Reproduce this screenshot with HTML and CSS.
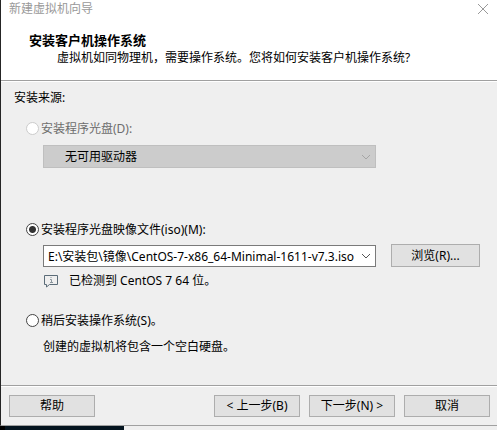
FILE: index.html
```html
<!DOCTYPE html>
<html lang="zh-CN">
<head>
    <meta charset="UTF-8">
    <meta name="viewport" content="width=device-width, initial-scale=1.0">
    <title>新建虚拟机向导</title>
    <link rel="stylesheet" href="styles.css">
</head>
<body>
    <form class="wizard">
        <header class="wizard-header">
            <div class="title-bar">
                <span>新建虚拟机向导</span>
                <button type="button" class="close" aria-label="关闭">
                    <svg width="10" height="10" viewBox="0 0 10 10"><path d="M0 0L10 10M10 0L0 10"/></svg>
                </button>
            </div>
            <h1>安装客户机操作系统</h1>
            <p>虚拟机如同物理机，需要操作系统。您将如何安装客户机操作系统?</p>
        </header>

        <main class="wizard-body">
            <h2>安装来源:</h2>

            <section class="option option-disc">
                <label class="radio disabled">
                    <input type="radio" name="source" value="disc" disabled>
                    <span>安装程序光盘(D):</span>
                </label>
                <div class="row">
                    <div class="combo combo-disabled">
                        <select aria-label="安装程序光盘" disabled>
                            <option>无可用驱动器</option>
                        </select>
                        <svg class="chevron" width="10" height="6" viewBox="0 0 10 6"><path d="M1 1L5 5L9 1"/></svg>
                    </div>
                </div>
            </section>

            <section class="option option-iso">
                <label class="radio">
                    <input type="radio" name="source" value="iso" checked>
                    <span>安装程序光盘映像文件(iso)(M):</span>
                </label>
                <div class="row">
                    <div class="combo combo-edit">
                        <input type="text" aria-label="映像文件路径" value="E:\安装包\镜像\CentOS-7-x86_64-Minimal-1611-v7.3.iso">
                        <button type="button" class="drop" aria-label="展开">
                            <svg class="chevron" width="10" height="6" viewBox="0 0 10 6"><path d="M1 1L5 5L9 1"/></svg>
                        </button>
                    </div>
                    <button type="button" class="btn browse">浏览(R)...</button>
                </div>
                <div class="info">
                    <svg width="14" height="13" viewBox="0 0 14 13">
                        <path class="bubble" d="M.5 .5H13.5V9.5H5.5L2.5 12V9.5H.5Z"/>
                        <path class="mark" d="M7 2V3M6 4.500H7.500V7.500M6 7.500H9"/>
                    </svg>
                    <span>已检测到 CentOS 7 64 位。</span>
                </div>
            </section>

            <section class="option">
                <label class="radio">
                    <input type="radio" name="source" value="later">
                    <span>稍后安装操作系统(S)。</span>
                </label>
                <p class="hint">创建的虚拟机将包含一个空白硬盘。</p>
            </section>
        </main>

        <footer class="wizard-footer">
            <button type="button" class="btn help">帮助</button>
            <button type="button" class="btn">&lt; 上一步(B)</button>
            <button type="submit" class="btn">下一步(N) &gt;</button>
            <button type="button" class="btn">取消</button>
        </footer>
    </form>
    <div class="backdrop"><div class="backdrop-dark"></div></div>
</body>
</html>
```
FILE: styles.css
```css
* { box-sizing: border-box; }
body { margin: 0; min-height: 100vh; display: flex; flex-direction: column; background-color: #efefef; color: #000; font-family: "Noto Sans", "Noto Sans CJK SC", sans-serif; font-size: 12px; line-height: 16px; }
h1, h2, p { margin: 0; font-size: 12px; font-weight: normal; }
button, input, select { font: inherit; color: inherit; margin: 0; }
svg { display: block; fill: none; }

.wizard { flex: 1; display: flex; flex-direction: column; border-left: 1px solid #252525; border-bottom: 1px solid #a0a0a0; }

.wizard-header { background-color: #fff; border-bottom: 1px solid #a0a0a0; padding-bottom: 14px; }
.title-bar { display: flex; justify-content: space-between; align-items: center; height: 17px; padding: 0 9px 0 8px; color: #999; }
.close { border: none; background: none; padding: 0; }
.close svg { stroke: #999; overflow: visible; }
.wizard-header h1 { padding-left: 28px; margin-top: 13px; font-size: 13px; font-weight: bold; line-height: 20px; }
.wizard-header p { padding-left: 56px; }

.wizard-body { flex: 1; border-top: 1px solid #fff; padding: 8px 17px 0 13px; }
.option { padding-left: 12px; }
.option-disc { margin-top: 14px; }
.option-iso { margin-top: 53px; margin-bottom: 24px; }
.radio { display: flex; align-items: center; gap: 2px; height: 16px; }
.radio span { padding-top: 1px; }
.radio.disabled { color: #6d6d6d; }
.radio input { appearance: none; width: 13px; height: 13px; border: 1px solid #444; border-radius: 50%; background-color: #fff; }
.radio input:checked { background-image: radial-gradient(circle, #333 3px, transparent 4px); }
.radio input:disabled { border-color: #ccc; }

.row { display: flex; align-items: flex-end; gap: 15px; margin: 7px 0 0 17px; }
.combo { position: relative; flex: 1; display: flex; align-items: center; height: 22px; border: 1px solid #7a7a7a; background-color: #fff; }
.combo-disabled { height: 23px; margin-top: 2px; margin-right: 104px; border-color: #bfbfbf; background-color: #ccc; }
.combo-disabled select { appearance: none; width: 100%; height: 100%; border: none; background: none; padding: 0 21px; color: #000; opacity: 1; }
.combo-disabled .chevron { position: absolute; right: 4px; pointer-events: none; stroke: #a5a5a5; }
.combo-edit input { flex: 1; min-width: 0; height: 100%; border: none; background: none; padding: 0 0 0 4px; outline: none; }
.drop { border: none; background: none; padding: 0 4px; }
.chevron { stroke: #555; }

.btn { width: 86px; height: 22px; border: 1px solid #adadad; background-color: #e1e1e1; padding: 0; line-height: 16px; }
.btn.browse { width: 89px; height: 23px; }
.info { display: flex; align-items: center; gap: 11px; margin: 6px 0 0 18px; }
.info .bubble { stroke: #5b6c78; }
.info .mark { stroke: #8b969e; }
.option-iso { margin-bottom: 23px; }
.hint { margin: 11px 0 0 17px; }

.wizard-footer { display: flex; gap: 9px; border-top: 1px solid #a0a0a0; box-shadow: inset 0 1px #fff; padding: 9px 7px 8px 8px; }
.help { margin-right: auto; }

.backdrop { height: 4px; }
.backdrop-dark { width: 25%; height: 100%; background-color: #04141f; border-left: 5px solid #000; }
```
